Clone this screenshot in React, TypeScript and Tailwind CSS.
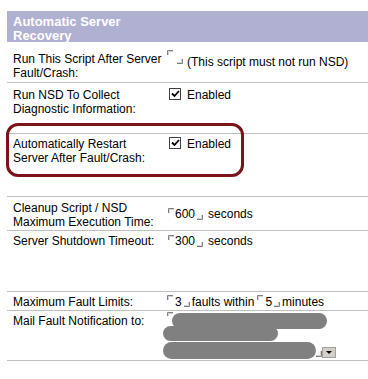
import React from 'react';

// little inset corners IE draws round an empty image / field
const CornerTL = ({ className = '' }: { className?: string }) => (
  <svg width="6" height="5" viewBox="0 0 6 5" className={`shrink-0 ${className}`}>
    <path d="M0.5 5V0.5H6" fill="none" stroke="#808080" />
    <path d="M1.5 5V1.5H6" fill="none" stroke="#d0d0d0" />
  </svg>
);

const CornerBR = ({ className = '' }: { className?: string }) => (
  <svg width="6" height="5" viewBox="0 0 6 5" className={`shrink-0 ${className}`}>
    <path d="M0 4.5H5.5V0" fill="none" stroke="#808080" />
    <path d="M0 3.5H4.5V0" fill="none" stroke="#d0d0d0" />
  </svg>
);

const Checkbox = () => (
  <div className="w-[12px] h-[12px] border border-[#404040] bg-white flex items-center justify-center shrink-0">
    <svg width="9" height="8" viewBox="0 0 9 8">
      <path d="M1 3.5L3.5 6L8 1" fill="none" stroke="#000" strokeWidth="1.8" />
    </svg>
  </div>
);

const Row = ({
  label,
  children,
  className = '',
  labelPad = '',
}: {
  label: React.ReactNode;
  children?: React.ReactNode;
  className?: string;
  labelPad?: string;
}) => (
  <div className={`flex border-b border-[#c0c0c0] ${className}`}>
    <div className={`w-[159px] pl-[6px] shrink-0 leading-[14px] ${labelPad}`}>{label}</div>
    <div className="flex-1">{children}</div>
  </div>
);

export default function App() {
  return (
    <div className="w-[368px] h-[379px] bg-white pl-[7px] pt-[11px] font-['Liberation_Sans',Arial,sans-serif] text-[12px] text-black overflow-hidden">
      {/* Header */}
      <div className="h-[31px] bg-[#b0b0d2] pl-[6px] pt-[4px] text-[13px] font-bold leading-[14px] text-white">
        Automatic Server
        <br />
        Recovery
      </div>

      {/* Run script */}
      <Row
        labelPad="pt-[10px] pb-[2px]"
        label={
          <>
            Run This Script After Server
            <br />
            Fault/Crash:
          </>
        }
      >
        <div className="flex items-start pt-[8px] pl-[1px]">
          <CornerTL />
          <CornerBR className="mt-[9px] ml-[4px]" />
          <span className="mt-[5px] ml-[4px] leading-[14px] whitespace-nowrap">(This script must not run NSD)</span>
        </div>
      </Row>

      {/* NSD */}
      <Row
        labelPad="pt-[5px] pb-[17px]"
        label={
          <>
            Run NSD To Collect
            <br />
            Diagnostic Information:
          </>
        }
      >
        <div className="flex items-start pt-[5px] pl-[3px]">
          <Checkbox />
          <span className="ml-[6px] leading-[14px]">Enabled</span>
        </div>
      </Row>

      {/* Auto restart, circled */}
      <div className="relative">
        <Row
          labelPad="pt-[3px] pb-[31px]"
          label={
            <>
              Automatically Restart
              <br />
              Server After Fault/Crash:
            </>
          }
        >
          <div className="flex items-start pt-[3px] pl-[3px]">
            <Checkbox />
            <span className="ml-[6px] leading-[14px]">Enabled</span>
          </div>
        </Row>
        <div className="absolute left-[-1px] top-[-11px] w-[238px] h-[54px] border-[3px] border-[#7a1418] rounded-[12px] pointer-events-none"></div>
      </div>

      {/* Cleanup */}
      <Row
        labelPad="pt-[4px] pb-[1px]"
        label={
          <>
            Cleanup Script / NSD
            <br />
            Maximum Execution Time:
          </>
        }
      >
        <div className="flex items-start pt-[10px] pl-[2px] leading-[14px]">
          <CornerTL className="mt-[1px]" />
          <span className="ml-[1px]">600</span>
          <CornerBR className="mt-[8px] ml-[2px]" />
          <span className="ml-[5px]">seconds</span>
        </div>
      </Row>

      {/* Shutdown timeout */}
      <Row labelPad="pt-[3px] pb-[43px]" label="Server Shutdown Timeout:">
        <div className="flex items-start pt-[3px] pl-[2px] leading-[14px]">
          <CornerTL className="mt-[1px]" />
          <span className="ml-[1px]">300</span>
          <CornerBR className="mt-[8px] ml-[2px]" />
          <span className="ml-[5px]">seconds</span>
        </div>
      </Row>

      {/* Fault limits */}
      <Row labelPad="pt-[3px] pb-[1px]" label="Maximum Fault Limits:">
        <div className="flex items-start pt-[3px] pl-[1px] leading-[14px]">
          <CornerTL />
          <span className="ml-[2px]">3</span>
          <CornerBR className="mt-[7px] ml-[2px]" />
          <span className="ml-[2px]">faults within</span>
          <CornerTL className="ml-[3px]" />
          <span className="ml-[2px]">5</span>
          <CornerBR className="mt-[7px] ml-[2px]" />
          <span className="ml-[2px]">minutes</span>
        </div>
      </Row>

      {/* Mail notification (addresses scribbled out) */}
      <Row labelPad="pt-[3px]" label="Mail Fault Notification to:">
        <svg width="173" height="49" viewBox="0 0 173 49" className="ml-[-3px] block">
          <path d="M4.5 5V1.5H10" fill="none" stroke="#808080" />
          <path d="M5.5 5V2.5H10" fill="none" stroke="#d0d0d0" />
          <rect x="9" y="2" width="155" height="16" rx="8" fill="#808080" />
          <rect x="0" y="15" width="115" height="15" rx="7.5" fill="#808080" />
          <rect x="0" y="31" width="153" height="17" rx="8.5" fill="#808080" />
          <path d="M153 45.5H158.5V40" fill="none" stroke="#808080" />
          <path d="M153 44.5H157.5V40" fill="none" stroke="#d0d0d0" />
          <rect x="159.5" y="36.5" width="13" height="10" fill="#d4d0c8" stroke="#a0a0a0" />
          <path d="M163 40H169L166 43Z" fill="#000" />
        </svg>
      </Row>
    </div>
  );
}
